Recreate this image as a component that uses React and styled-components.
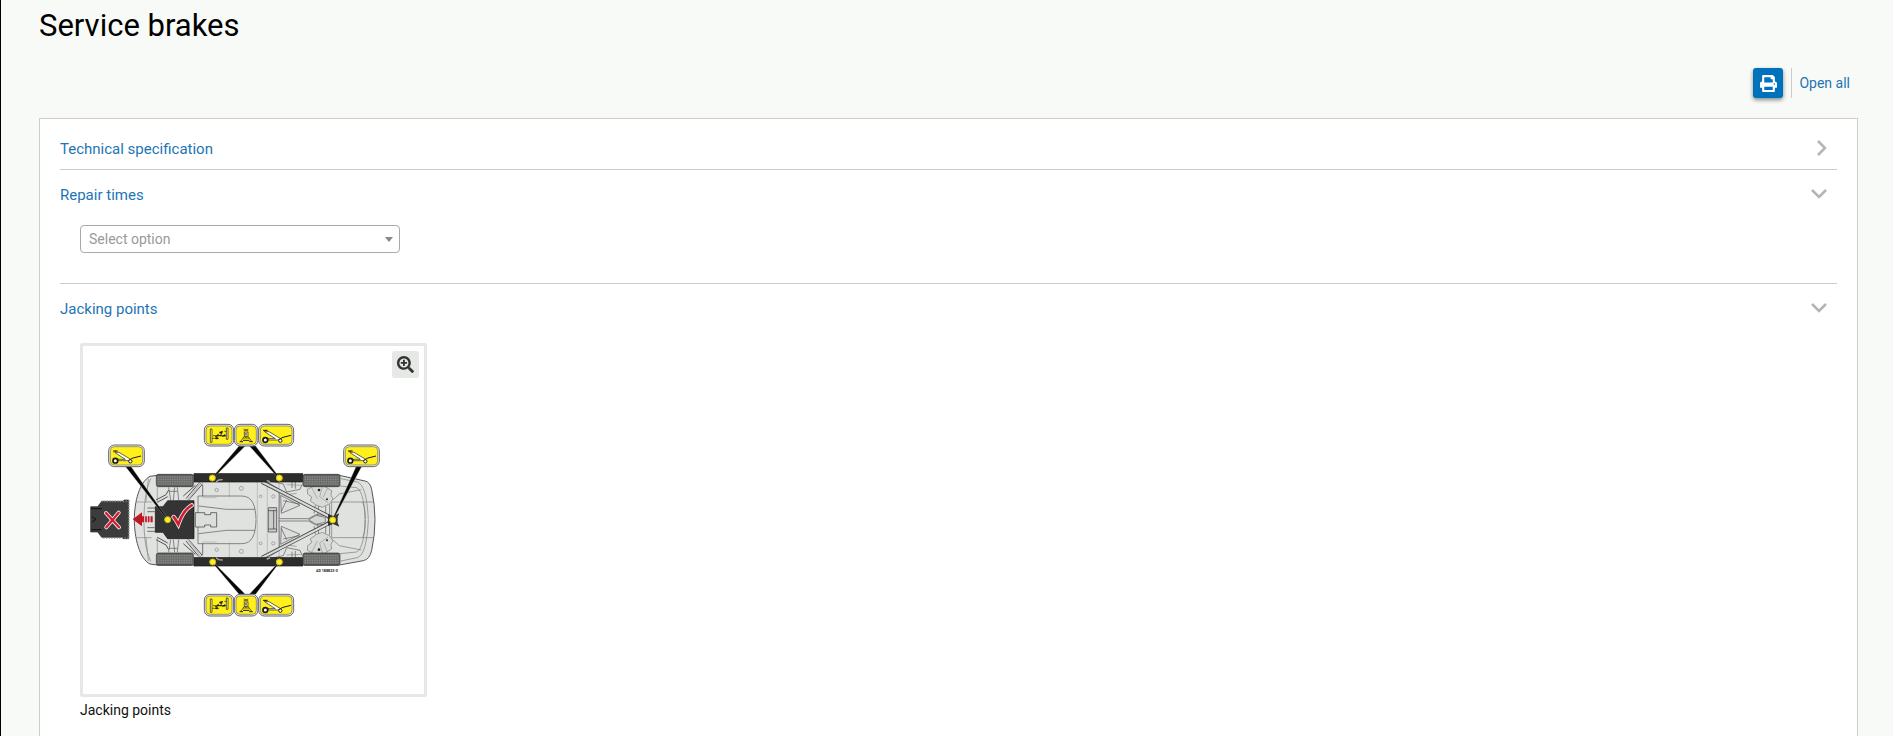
import React, { useState } from "react";
import styled, { createGlobalStyle } from "styled-components";
import { FaPrint, FaSearchPlus } from "react-icons/fa";

const GlobalStyle = createGlobalStyle`
  * {
    box-sizing: border-box;
  }
  body {
    margin: 0;
    background-color: #f8faf7;
    font-family: Roboto, "Liberation Sans", sans-serif;
    font-size: 14px;
    color: #111;
  }
  button,
  select {
    font-family: inherit;
  }
`;

function Chevron({ open }) {
  return open ? (
    <svg width="16" height="10" viewBox="0 0 16 10" aria-hidden="true">
      <path d="M1 1 L8 8 L15 1" fill="none" stroke="#b4b4b4" strokeWidth="2.5" />
    </svg>
  ) : (
    <svg width="10" height="16" viewBox="0 0 10 16" aria-hidden="true">
      <path d="M1 1 L8 8 L1 15" fill="none" stroke="#b4b4b4" strokeWidth="2.5" />
    </svg>
  );
}

function Section({ id, title, open, onToggle, children }) {
  return (
    <SectionContainer>
      <SectionHeading>
        <SectionToggle id={id} type="button" aria-expanded={open} onClick={onToggle}>
          <span>{title}</span>
          <Chevron open={open} />
        </SectionToggle>
      </SectionHeading>
      {open && children && <SectionBody>{children}</SectionBody>}
    </SectionContainer>
  );
}

function Tag({ x, y, width, children }) {
  return (
    <g transform={`translate(${x} ${y})`}>
      <rect width={width} height="65" rx="17" fill="#eee" stroke="#666" strokeWidth="3" />
      <rect x="5" y="5" width={width - 10} height="55" rx="12" fill="#fff01c" stroke="#666" strokeWidth="2" />
      {children}
    </g>
  );
}

function TrolleyJack() {
  return (
    <g stroke="#1b1b12" fill="none" strokeWidth="2">
      <path d="M20 22 L31 22 L66 43 L58 47 L28 47 V43 H50 L19 23 Z" fill="#fff" />
      <path d="M13 18 H27 M17 22 L22 17" strokeWidth="3" />
      <path d="M65 43 L73 39 L97 33" strokeWidth="3" />
      <circle cx="20" cy="47" r="7" fill="#fff" strokeWidth="5" />
      <circle cx="65" cy="49" r="5" fill="#fff" strokeWidth="3" />
    </g>
  );
}

function Lift() {
  return (
    <g stroke="#1b1b12" strokeWidth="2">
      <path d="M18 14 h5 v40 h-5 z M66 11 h5 v34 h-5 z" fill="#fff6a0" />
      <path d="M23 42 H30 M60 21 H66" fill="none" />
      <path d="M26 34 H36 M36 42 H44 M46 27 H54 M55 34 H64" fill="none" strokeWidth="2" />
      <path d="M33 37 l9 -7 l2 4 z M31 42 l8 -3 v5 z M45 24 l10 -3 l-3 6 z M53 36 l9 -5 l1 4 z M44 34 l8 -3 v4 z" fill="#1b1b12" />
    </g>
  );
}

function Stand() {
  return (
    <g stroke="#1b1b12" fill="none" strokeWidth="3">
      <path d="M28 14 L42 20 M42 14 L28 20" strokeWidth="2" />
      <path d="M30 23 h11 v13 h-11 z" fill="#fff6a0" strokeWidth="2" />
      <path d="M35 26 V33" />
      <path d="M30 36 L19 51 M41 36 L52 51 M27 41 H44 M35 36 V41" strokeWidth="2" />
      <path d="M16 52 H26 M45 52 H55 M26 48 H45" />
    </g>
  );
}

function TagRow({ y }) {
  return (
    <>
      <Tag x={403} y={y} width={88}>
        <Lift />
      </Tag>
      <Tag x={493} y={y} width={71}>
        <Stand />
      </Tag>
      <Tag x={566} y={y} width={105}>
        <TrolleyJack />
      </Tag>
    </>
  );
}

// everything on one side of the centre line, drawn again mirrored for the other
function UndersideHalf() {
  return (
    <g fill="none" stroke="#555" strokeWidth="2">
      <path d="M235 430 L228 500 M198 500 H245 M262 455 V500" stroke="#888" />
      <path d="M398 440 V485 M478 440 V485 M562 440 V553 M592 440 V553 M627 440 V553 M398 487 H440" stroke="#aaa" />
      <path d="M384 553 V482 H515 C548 482 557 512 558 553 M386 512 L470 522 H555 M398 482 V450 L384 438" />
      <circle cx="440" cy="464" r="5" stroke="#888" />
      <circle cx="514" cy="459" r="6" stroke="#888" />
      <circle cx="572" cy="483" r="4" stroke="#888" />
      <circle cx="610" cy="483" r="5" stroke="#888" />

      <path d="M296 456 L302 494 M314 456 L310 494 M322 456 L326 494 M297 468 H322" />
      <path d="M258 494 L288 478 L296 464 M262 501 L293 484 M348 490 L386 444 M356 494 L396 448 M340 482 L376 450" strokeWidth="3" />
      <path d="M352 496 L390 446" stroke="#bbb" strokeWidth="4" />

      <path d="M592 440 L628 462 L627 553 M604 438 L640 446 L650 470 L690 462 L697 446 M676 425 V460 M666 440 V458" />
      <path d="M632 480 L690 510 L634 534 Z M640 496 L688 506 M634 528 L650 494" fill="#ddd" />
      <path d="M630 470 L648 478 L680 474 M650 448 L692 450" stroke="#888" />

      <path
        d="M712 462 L732 452 L764 453 L785 466 L783 480 L789 490 L780 505 L757 516 L740 510 L721 497 L725 485 L713 476 Z"
        fill="#d8dad8"
        stroke="#777"
      />
      <path d="M725 456 L742 490 M757 454 L749 484 L774 502 M772 459 L760 485" stroke="#999" />
      <circle cx="747" cy="464" r="4" fill="#222" stroke="none" />
      <circle cx="771" cy="492" r="3" fill="#222" stroke="none" />
      <path d="M736 510 L732 535 M746 512 L743 540 M767 513 V540 M779 508 V544" />
      <path d="M627 550 H715 L738 538 L766 540 L776 553" />

      <path d="M576 440 L786 548" stroke="#333" strokeWidth="11" />
      <path d="M576 440 L786 548" stroke="#d9dbd9" strokeWidth="7" />
      <path d="M586 449 L700 508" stroke="#777" strokeWidth="2" />

      <path d="M785 553 V500 H878 C885 516 886 534 886 553 M788 494 L808 476 L874 463 M810 452 L860 457 C878 466 884 510 885 553" stroke="#777" />
      <path d="M812 430 L862 440 Q890 449 895 553 M878 500 H910" stroke="#777" />

      <rect x="372" y="415" width="326" height="25" fill="#2d2d2d" stroke="#151515" />
      <path d="M438 440 L446 434 L458 433 M590 436 L600 439" stroke="#aaa" strokeWidth="4" />
      <Tyre x={259} />
      <Tyre x={699} />
    </g>
  );
}

function Tyre({ x }) {
  return (
    <g transform={`translate(${x} 414)`}>
      <rect x="0" y="3" width="111" height="37" rx="6" fill="#6b6d6b" stroke="#333" strokeWidth="2" />
      <path d="M5 11 H106 M5 18 H106 M5 25 H106 M5 32 H106" stroke="#a2a4a2" strokeWidth="2" strokeDasharray="4 3" />
      <path d="M3 5 H108 M3 38 H108" stroke="#444" strokeWidth="2" />
    </g>
  );
}

function Undertray() {
  return (
    <g>
      <path
        d="M62 514 H83 L95 498 H160 L162 494 H176 V610 H160 L158 606 H95 L83 590 H62 Z"
        fill="#3c3c3c"
        stroke="#2a2a2a"
        strokeWidth="2"
      />
      <path d="M95 498 H176 V608 H95" fill="none" stroke="#888" strokeWidth="5" strokeDasharray="3 5" />
      <path d="M64 520 H96 M64 583 H94 M66 544 L78 552 L66 560" fill="none" stroke="#111" strokeWidth="3" />
      <path d="M108 533 L147 576 M146 532 L109 576" stroke="#eee" strokeWidth="12" strokeLinecap="round" />
      <path d="M108 533 L147 576 M146 532 L109 576" stroke="#cf1f31" strokeWidth="7" strokeLinecap="round" />
    </g>
  );
}

function JackingDiagram() {
  const points = [
    [427, 428],
    [628, 428],
    [428, 680],
    [628, 680],
    [293, 553],
    [788, 554],
  ];

  return (
    <Diagram viewBox="39 32 1023 1044" role="img" aria-label="Jacking points">
      <path
        d="M262 420 L240 423 C208 440 193 500 193 553 C193 606 208 670 240 686 L262 689 H808 L880 676 Q899 672 905 645 Q915 600 915 553 Q915 508 905 462 Q900 440 885 437 L808 420 Z"
        fill="#e0e2e0"
        stroke="#555"
        strokeWidth="3"
      />
      <path d="M242 430 C224 470 222 520 222 553 C222 590 224 640 242 678" fill="none" stroke="#777" strokeWidth="2" />
      <UndersideHalf />
      <g transform="translate(0 1107) scale(1 -1)">
        <UndersideHalf />
      </g>

      <path d="M376 532 H404 V538 H422 V532 H440 V575 H422 V569 H404 V575 H376 Z" fill="#dcdedc" stroke="#333" strokeWidth="2" />
      <path d="M595 517 H620 V590 H595 Z M595 526 H620 M595 581 H620 M611 526 V581" fill="#ccc" stroke="#333" strokeWidth="2" />
      <path d="M716 553 L738 540 L766 546 V561 L738 567 Z" fill="#d4d6d4" stroke="#555" strokeWidth="2" />
      <path d="M774 536 L789 542 L808 534 L803 546 V562 L808 574 L789 566 L774 572 Z" fill="#333" />

      <path d="M256 514 H279 L293 496 H372 V610 H293 L279 591 H256 Z" fill="#333433" stroke="#111" strokeWidth="2" />
      <path d="M232 518 H288 M232 529 H254 M232 577 H254 M232 588 H288" stroke="#333" strokeWidth="2" />
      <path d="M188 552 L216 531 V543 H248 V561 H216 V573 Z" fill="#bf1824" />
      <path d="M224 541 V563 M232 541 V563 M240 541 V563" stroke="#ddd" strokeWidth="3" />
      <path d="M311 545 C318 553 321 560 325 567 C334 541 347 520 365 510" fill="none" stroke="#eee" strokeWidth="13" strokeLinecap="round" />
      <path d="M311 545 C318 553 321 560 325 567 C334 541 347 520 365 510" fill="none" stroke="#cf1f31" strokeWidth="8" strokeLinecap="round" />
      <Undertray />

      <g stroke="#ccc" strokeWidth="1" fill="#080808">
        <path d="M165 392 H182 L294 551 L291 553 Z" />
        <path d="M859 392 H876 L790 553 L787 552 Z" />
        <path d="M507 332 H526 L428 430 L426 427 Z" />
        <path d="M538 332 H557 L629 427 L627 430 Z" />
        <path d="M507 777 H526 L429 679 L426 681 Z" />
        <path d="M538 777 H557 L629 681 L627 679 Z" />
      </g>
      {points.map(([x, y]) => (
        <circle key={`${x}-${y}`} cx={x} cy={y} r="9" fill="#fff02a" stroke="#d0bd12" strokeWidth="3" />
      ))}

      <Tag x={116} y={329} width={107}>
        <TrolleyJack />
      </Tag>
      <Tag x={821} y={329} width={107}>
        <TrolleyJack />
      </Tag>
      <TagRow y={267} />
      <TagRow y={777} />
      <text x="738" y="710" fontSize="11" fontWeight="bold" fill="#222">
        AD 188823-0
      </text>
    </Diagram>
  );
}

export default function App() {
  const [open, setOpen] = useState({ spec: false, times: true, jacking: true });

  const toggle = (key) => setOpen({ ...open, [key]: !open[key] });

  const openAll = (e) => {
    e.preventDefault();
    setOpen({ spec: true, times: true, jacking: true });
  };

  return (
    <Page>
      <GlobalStyle />
      <Title>Service brakes</Title>
      <Toolbar>
        <PrintButton type="button" aria-label="Print" onClick={() => window.print()}>
          <FaPrint />
        </PrintButton>
        <OpenAll href="#all" onClick={openAll}>
          Open all
        </OpenAll>
      </Toolbar>

      <Panel>
        <Section
          id="spec"
          title="Technical specification"
          open={open.spec}
          onToggle={() => toggle("spec")}
        />
        <Section
          id="times"
          title="Repair times"
          open={open.times}
          onToggle={() => toggle("times")}
        >
          <SelectBox>
            <Select aria-labelledby="times" defaultValue="">
              <option value="">Select option</option>
            </Select>
            <svg width="8" height="5" viewBox="0 0 8 5" aria-hidden="true">
              <path d="M0 0 H8 L4 5 Z" fill="#888" />
            </svg>
          </SelectBox>
        </Section>
        <Section
          id="jacking"
          title="Jacking points"
          open={open.jacking}
          onToggle={() => toggle("jacking")}
        >
          <Figure>
            <Frame>
              <JackingDiagram />
              <ZoomButton type="button" aria-label="Zoom in">
                <FaSearchPlus />
              </ZoomButton>
            </Frame>
            <figcaption>Jacking points</figcaption>
          </Figure>
        </Section>
      </Panel>
    </Page>
  );
}

const Page = styled.main`
  min-height: 100vh;
  padding: 8px 35px 32px 38px;
  border-left: 1px solid #000;
`;

const Title = styled.h1`
  margin: 0;
  font-size: 31px;
  font-weight: 400;
  line-height: 36px;
  color: #000;
`;

const Toolbar = styled.div`
  display: flex;
  justify-content: flex-end;
  gap: 8px;
  margin: 24px 8px 20px 0;
`;

const PrintButton = styled.button`
  display: flex;
  align-items: center;
  justify-content: center;
  width: 30px;
  height: 30px;
  padding: 0;
  border: none;
  border-radius: 3px;
  background-color: #0072bc;
  box-shadow: 0 2px 4px rgba(0, 0, 0, 0.45);
  color: #fff;
  font-size: 17px;
  cursor: pointer;
`;

const OpenAll = styled.a`
  padding-left: 7px;
  border-left: 1px solid #ccc;
  line-height: 30px;
  color: #1c75b5;
  text-decoration: none;
`;

const Panel = styled.div`
  padding: 5px 20px;
  border: 1px solid #ccceca;
  background-color: #fff;
`;

const SectionContainer = styled.section`
  padding: 10px 0 5px;

  & + & {
    border-top: 1px solid #ccc;
  }
`;

const SectionHeading = styled.h2`
  margin: 0;
`;

const SectionToggle = styled.button`
  display: flex;
  justify-content: space-between;
  align-items: center;
  width: 100%;
  height: 30px;
  padding: 0 10px 0 0;
  border: none;
  background: none;
  font-size: 15px;
  color: #1c75b5;
  cursor: pointer;

  svg {
    margin-bottom: 2px;
  }
`;

const SectionBody = styled.div`
  padding: 15px 20px 25px;
`;

const SelectBox = styled.div`
  position: relative;
  width: 320px;

  svg {
    position: absolute;
    top: 12px;
    right: 7px;
    pointer-events: none;
  }
`;

const Select = styled.select`
  display: block;
  appearance: none;
  width: 100%;
  height: 28px;
  padding: 0 24px 0 8px;
  border: 1px solid #aaa;
  border-radius: 4px;
  background-color: #fff;
  font-size: 14px;
  color: #999;
`;

const Figure = styled.figure`
  width: 347px;
  margin: 4px 0 0;

  figcaption {
    padding-top: 3px;
    line-height: 20px;
  }
`;

const Frame = styled.div`
  position: relative;
  border: 3px solid #e6e8e6;
  border-radius: 2px;
`;

const Diagram = styled.svg`
  display: block;
  width: 100%;
`;

const ZoomButton = styled.button`
  position: absolute;
  top: 5px;
  right: 5px;
  display: flex;
  align-items: center;
  justify-content: center;
  width: 27px;
  height: 27px;
  padding: 0;
  border: none;
  border-radius: 3px;
  background-color: #e6e8e5;
  color: #333;
  font-size: 17px;
  cursor: pointer;
`;
